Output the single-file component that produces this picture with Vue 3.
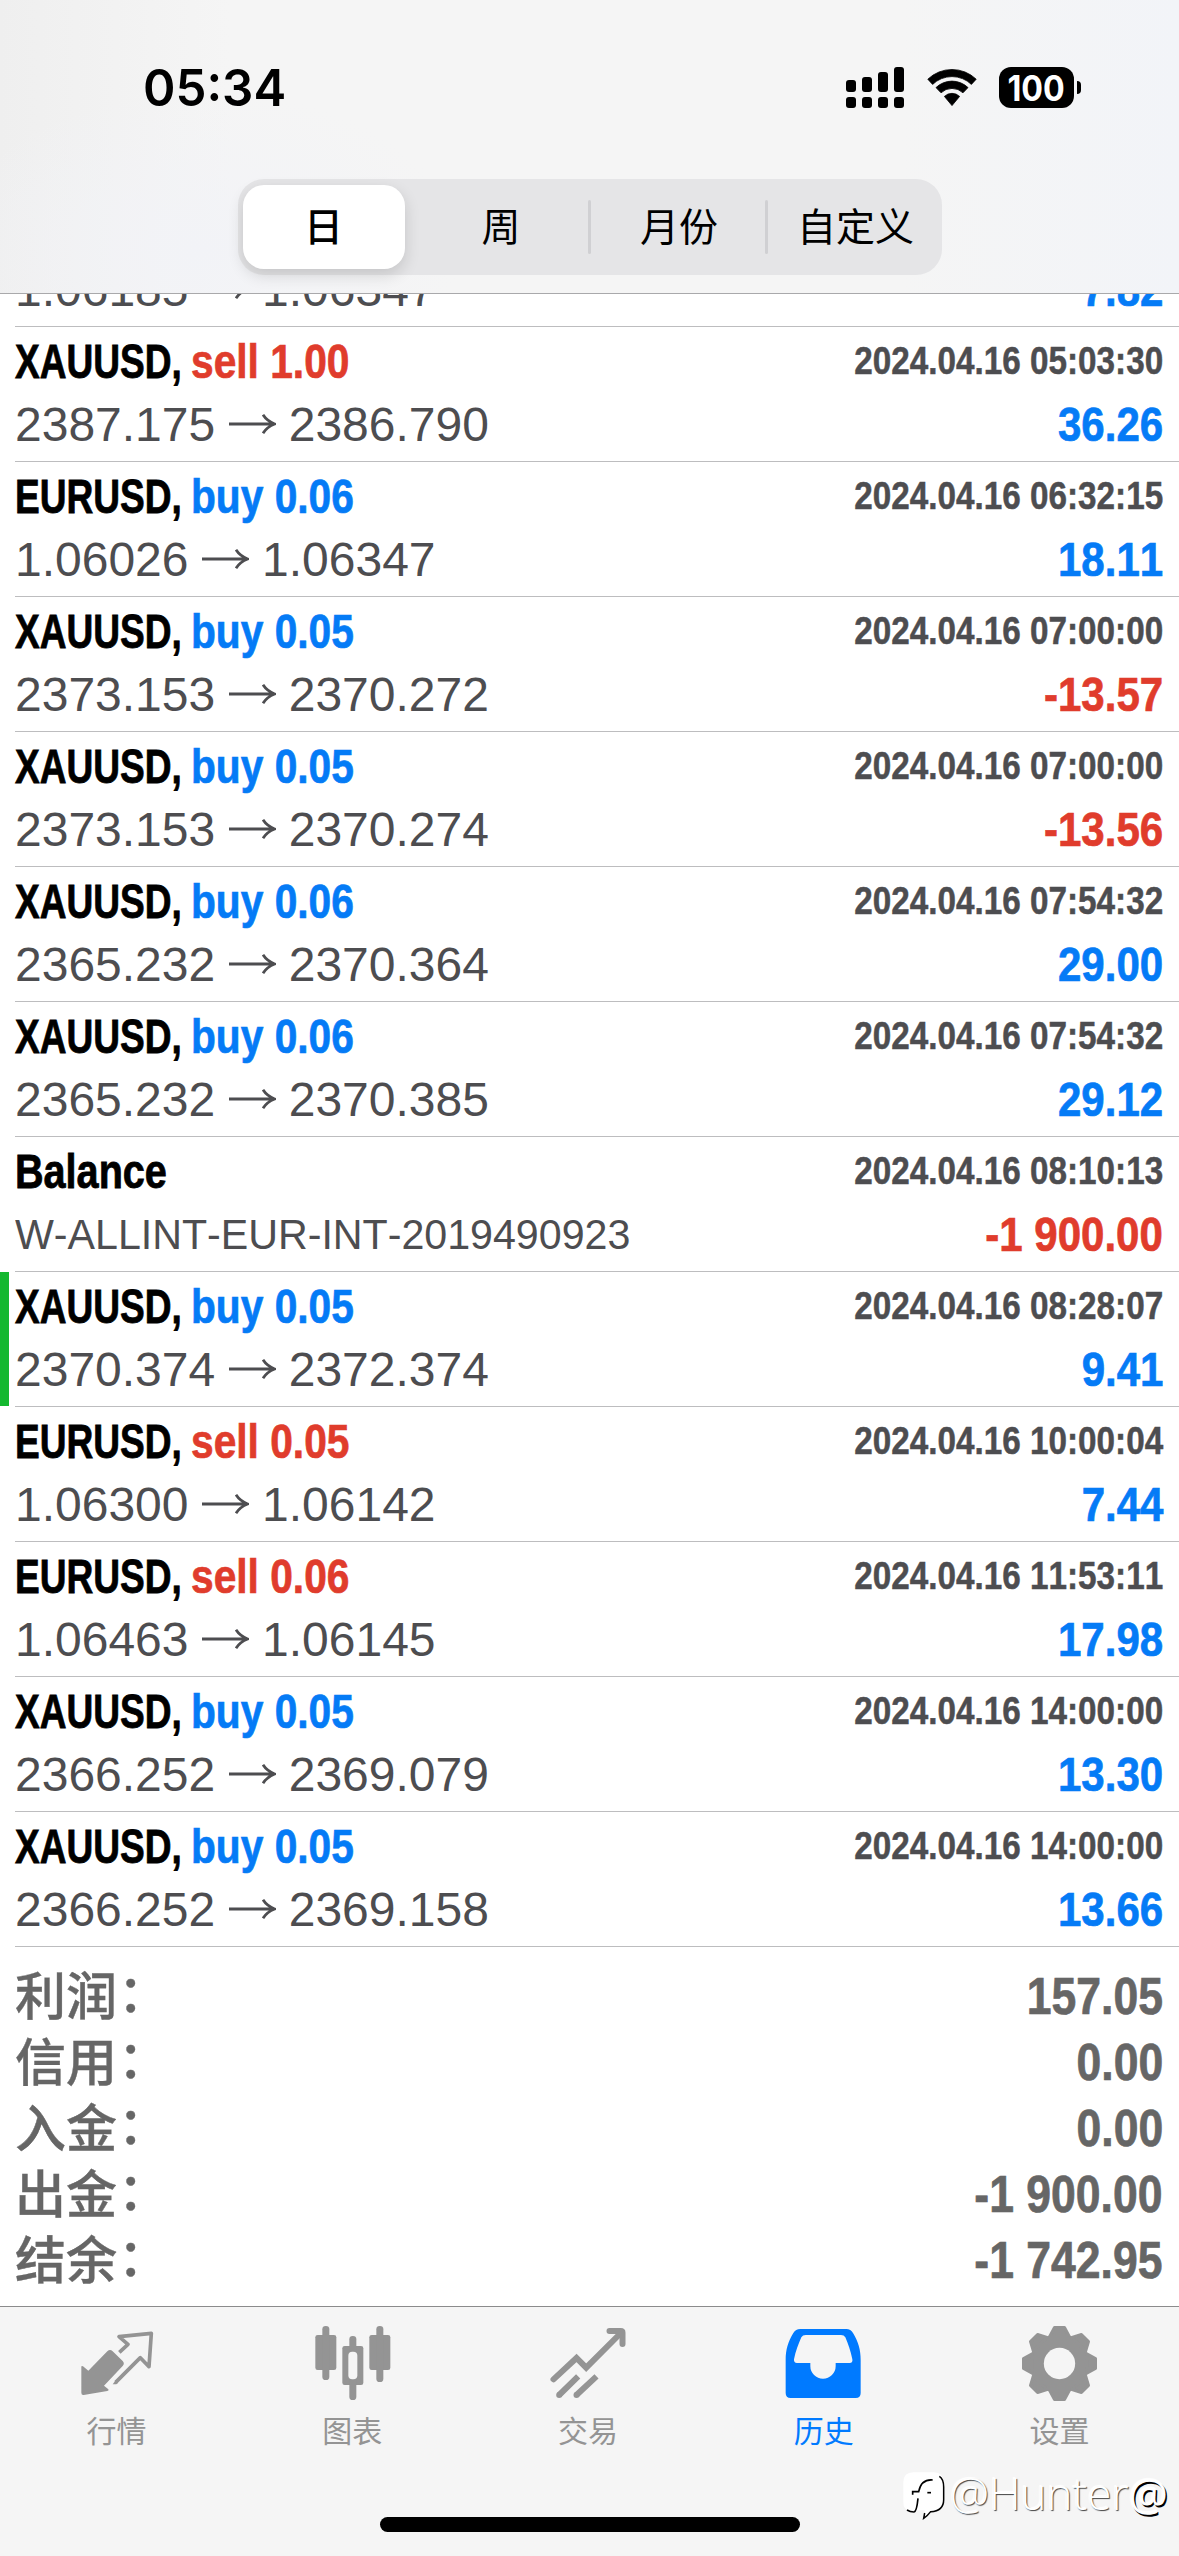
<script setup>
const trades = [
  { partial: true, open: '1.06185', close: '1.06347', profit: '7.82' },
  { symbol: 'XAUUSD', side: 'sell', volume: '1.00', open: '2387.175', close: '2386.790', time: '2024.04.16 05:03:30', profit: '36.26' },
  { symbol: 'EURUSD', side: 'buy', volume: '0.06', open: '1.06026', close: '1.06347', time: '2024.04.16 06:32:15', profit: '18.11' },
  { symbol: 'XAUUSD', side: 'buy', volume: '0.05', open: '2373.153', close: '2370.272', time: '2024.04.16 07:00:00', profit: '-13.57' },
  { symbol: 'XAUUSD', side: 'buy', volume: '0.05', open: '2373.153', close: '2370.274', time: '2024.04.16 07:00:00', profit: '-13.56' },
  { symbol: 'XAUUSD', side: 'buy', volume: '0.06', open: '2365.232', close: '2370.364', time: '2024.04.16 07:54:32', profit: '29.00' },
  { symbol: 'XAUUSD', side: 'buy', volume: '0.06', open: '2365.232', close: '2370.385', time: '2024.04.16 07:54:32', profit: '29.12' },
  { comment: 'W-ALLINT-EUR-INT-2019490923', time: '2024.04.16 08:10:13', profit: '-1 900.00' },
  { symbol: 'XAUUSD', side: 'buy', volume: '0.05', open: '2370.374', close: '2372.374', time: '2024.04.16 08:28:07', profit: '9.41', marked: true },
  { symbol: 'EURUSD', side: 'sell', volume: '0.05', open: '1.06300', close: '1.06142', time: '2024.04.16 10:00:04', profit: '7.44' },
  { symbol: 'EURUSD', side: 'sell', volume: '0.06', open: '1.06463', close: '1.06145', time: '2024.04.16 11:53:11', profit: '17.98' },
  { symbol: 'XAUUSD', side: 'buy', volume: '0.05', open: '2366.252', close: '2369.079', time: '2024.04.16 14:00:00', profit: '13.30' },
  { symbol: 'XAUUSD', side: 'buy', volume: '0.05', open: '2366.252', close: '2369.158', time: '2024.04.16 14:00:00', profit: '13.66' },
]

const totals = [
  { label: '利润', value: '157.05' },
  { label: '信用', value: '0.00' },
  { label: '入金', value: '0.00' },
  { label: '出金', value: '-1 900.00' },
  { label: '结余', value: '-1 742.95' },
]

const teeth = [0, 45, 90, 135, 180, 225, 270, 315]
</script>

<template>
  <div class="screen">
    <header class="nav">
      <div class="status">
        <div class="clock"><span>05:34</span></div>
        <div class="indicators">
          <svg class="signal" width="58" height="41" viewBox="0 0 58 41">
            <rect x="0" y="13" width="10" height="12" rx="3" />
            <rect x="16" y="10" width="10" height="15" rx="3" />
            <rect x="32" y="5" width="10" height="20" rx="3" />
            <rect x="48" y="0" width="10" height="25" rx="3" />
            <rect v-for="x in [0, 16, 32, 48]" :key="x" :x="x" y="30" width="10" height="11" rx="3" />
          </svg>
          <svg class="wifi" width="50" height="37" viewBox="0 0 50 37">
            <path d="M0.8 10.2 A35 35 0 0 1 49.2 10.2 L44.4 15.4 A28 28 0 0 0 5.6 15.4 Z" stroke="#000" stroke-width="0.8" stroke-linejoin="round" />
            <path d="M9 18.6 A23 23 0 0 1 41 18.6 L36 23.8 A16 16 0 0 0 14 23.8 Z" stroke="#000" stroke-width="0.8" stroke-linejoin="round" />
            <path d="M17.4 27.4 A11 11 0 0 1 32.6 27.4 L25 36.6 Z" stroke="#000" stroke-width="0.8" stroke-linejoin="round" />
          </svg>
          <div class="battery"><div class="cell"><span>100</span></div><i class="nub"></i></div>
        </div>
      </div>
      <div class="segments">
        <div class="segment selected">日</div>
        <div class="segment week">周</div>
        <i class="divider"></i>
        <div class="segment month">月份</div>
        <i class="divider"></i>
        <div class="segment custom">自定义</div>
      </div>
    </header>

    <main class="history">
      <ul class="trades">
        <li v-for="(t, i) in trades" :key="i" class="trade" :class="{ marked: t.marked, partial: t.partial }">
          <div class="cells">
            <div v-if="!t.partial" class="line first">
              <div v-if="t.symbol" class="title">
                <span class="symbol">{{ t.symbol }},</span>
                <span class="side" :class="t.side">{{ t.side }} {{ t.volume }}</span>
              </div>
              <div v-else class="title">
                <span class="symbol balance">Balance</span>
              </div>
              <span class="time">{{ t.time }}</span>
            </div>
            <div class="line second">
              <span v-if="t.comment" class="comment">{{ t.comment }}</span>
              <div v-else class="prices">
                <span>{{ t.open }}</span>
                <svg class="arrow" width="47" height="20" viewBox="0 0 47 20">
                  <path d="M0 10 H45 M34 0.8 Q38 7 45.6 10 Q38 13 34 19.2" fill="none" stroke="#4d4d50" stroke-width="2.8" />
                </svg>
                <span>{{ t.close }}</span>
              </div>
              <span class="profit" :class="{ loss: t.profit[0] === '-' }">{{ t.profit }}</span>
            </div>
          </div>
        </li>
      </ul>
      <dl class="totals">
        <div v-for="s in totals" :key="s.label" class="total">
          <dt>{{ s.label }}<span class="colon">：</span></dt>
          <dd>{{ s.value }}</dd>
        </div>
      </dl>
    </main>

    <footer class="tabbar">
      <nav class="tabs">
        <div class="tab">
          <svg class="icon" viewBox="240 96 228 240">
            <path d="M244 231 Q244 226 249 229 L265 242 L322 184 Q330 176 338 184 L368 213 Q375 220 368 228 L312 287 L325 298 Q328 302 322 303 L251 315 Q244 316 244 308 Z" />
            <path d="M358 187 L384 163 L357 140 L454 130 L447 230 L421 203 L347 277" fill="none" stroke="#949494" stroke-width="11" stroke-linejoin="round" />
            <path d="M338 283 L347 271 L354 278 L349 283 Z" />
          </svg>
          <span>行情</span>
        </div>
        <div class="tab">
          <svg class="icon" viewBox="947 96 228 240">
            <rect x="945" y="135" width="63" height="105" rx="7" />
            <rect x="966" y="108" width="21" height="162" rx="10" />
            <rect x="1107" y="135" width="63" height="105" rx="7" />
            <rect x="1128" y="108" width="21" height="168" rx="10" />
            <rect x="1026" y="168" width="63" height="117" rx="7" />
            <rect x="1047" y="138" width="21" height="192" rx="10" />
            <rect x="1044" y="185" width="27" height="83" rx="12" fill="#f5f5f5" />
          </svg>
          <span>图表</span>
        </div>
        <div class="tab">
          <svg class="icon" viewBox="394.5 96 228 240">
            <g fill="none" stroke="#949494" stroke-width="18" stroke-linecap="round" stroke-linejoin="miter">
              <path d="M402 268 L471 204 L500 233 L604 129" />
              <path d="M570 123 H604 Q609 123 609 128 V162" stroke-linejoin="round" />
            </g>
            <g fill="none" stroke="#949494" stroke-width="18">
              <path d="M419 315 L476 259 M471 315 L531 259" />
            </g>
            <circle cx="419" cy="315" r="9" />
            <circle cx="471" cy="315" r="9" />
          </svg>
          <span>交易</span>
        </div>
        <div class="tab active">
          <svg class="icon" viewBox="22 96 228 240">
            <path fill-rule="evenodd" d="M62 117 H200 Q213 117 220 129 C236 155 243 180 243 210 V309 Q243 324 228 324 H33 Q18 324 18 309 V210 C18 180 25 155 41 129 Q48 117 62 117 Z M78 135 Q69 135 65 142 C56 163 48 183 43 208 Q42 219 52 219 H92 V228 A38 38 0 0 0 168 228 V219 H210 Q220 219 218 208 C213 183 206 163 197 142 Q193 135 184 135 Z" />
          </svg>
          <span>历史</span>
        </div>
        <div class="tab">
          <svg class="icon" viewBox="729 96 228 240">
            <g transform="translate(838.5 220.5)">
              <circle r="89" />
              <path v-for="a in teeth" :key="a" :transform="`rotate(${a})`" d="M-29 -82 L-15 -108 H15 L29 -82 Z" stroke="#949494" stroke-width="9" stroke-linejoin="round" />
              <circle r="47" fill="#f5f5f5" />
            </g>
          </svg>
          <span>设置</span>
        </div>
      </nav>
      <div class="home"></div>
      <div class="watermark">
        <svg width="44" height="50" viewBox="366 542 132 150">
          <path d="M400 546 H462 Q490 546 490 576 V636 Q490 664 452 664 L431 684 L434 660 H400 Q370 666 370 636 V576 Q370 546 400 546 Z" fill="#fff" />
          <g fill="none" stroke="#000">
            <path d="M478 558 Q491 566 491 590 V628 Q491 662 452 664 Q444 675 431 684 L434 668" stroke-width="4.5" />
            <path d="M458 569 Q424 566 416 604 H398 V613" stroke-width="5" />
            <path d="M414 624 Q410 664 402 665 Q390 665 381 659" stroke-width="5" />
            <path d="M442 607 H453" stroke-width="5" />
          </g>
        </svg>
        <span class="handle">@Hunter<b>@</b></span>
      </div>
    </footer>
  </div>
</template>

<style>
body {
  margin: 0;
  background: #fff;
}
</style>

<style scoped>
.screen {
  width: 1179px;
  height: 2556px;
  display: flex;
  flex-direction: column;
  overflow: hidden;
  background: #fff;
  font-family: "Liberation Sans", "Noto Sans CJK SC", sans-serif;
  font-kerning: none;
}
.nav {
  box-sizing: border-box;
  height: 294px;
  flex: none;
  display: flex;
  flex-direction: column;
  align-items: center;
  border-bottom: 1px solid #a9a9ab;
  background:
    radial-gradient(ellipse 260px 160px at 200px 250px, #f2f3f7 0%, transparent 100%),
    linear-gradient(90deg, #efefef 0, #f5f5f5 230px, #f5f5f5 900px, #f2f4f8 1179px);
}
.status {
  box-sizing: border-box;
  width: 100%;
  height: 179px;
  padding: 67px 98px 0 143px;
  display: flex;
  justify-content: space-between;
  align-items: flex-start;
}
.clock {
  font: 600 51px/42px Inter, sans-serif;
}
.clock span {
  display: inline-block;
  transform: scaleX(0.965);
  transform-origin: left;
}
.indicators {
  display: flex;
  height: 41px;
}
.wifi {
  margin: 2px 22px 0 23px;
}
.battery {
  display: flex;
  align-items: center;
  gap: 3px;
}
.cell {
  width: 75px;
  height: 41px;
  border-radius: 12px;
  background: #000;
  color: #fff;
  text-align: center;
  font: 700 35px/42px Inter, sans-serif;
}
.cell span {
  display: inline-block;
  transform: scaleX(0.92);
}
.nub {
  width: 4px;
  height: 13px;
  border-radius: 0 5px 5px 0;
  background: #000;
}
.segments {
  box-sizing: border-box;
  width: 704px;
  height: 96px;
  padding: 6px 0 6px 5px;
  display: flex;
  align-items: center;
  border-radius: 26px;
  background: #e5e5e7;
}
.segment {
  flex: none;
  box-sizing: border-box;
  height: 84px;
  border-radius: 21px;
  text-align: center;
  font: 400 39px/78px "Noto Sans CJK SC", sans-serif;
  color: #000;
}
.selected {
  width: 162px;
  font-weight: 500;
  background: #fff;
  box-shadow: 0 6px 16px rgba(0, 0, 0, 0.14);
}
.week {
  width: 173px;
  margin-left: 10px;
}
.month {
  width: 174px;
  padding-left: 3px;
}
.custom {
  width: 174px;
  padding-left: 2px;
}
.divider {
  width: 3px;
  height: 54px;
  border-radius: 2px;
  background: #d0d0d3;
}
.history {
  height: 2012px;
  flex: none;
  overflow: hidden;
}
.trades {
  list-style: none;
  margin: -32px 0 0;
  padding: 0;
}
.trade {
  box-sizing: border-box;
  height: 135px;
  padding-left: 15px;
}
.trade.partial {
  height: 65px;
}
.trade.marked {
  background: linear-gradient(#14b82f, #14b82f) 0 0 / 9px 134px no-repeat;
}
.cells {
  box-sizing: border-box;
  height: 100%;
  padding-right: 16px;
  border-bottom: 1px solid #bdbdbf;
}
.line {
  display: flex;
  justify-content: space-between;
  white-space: pre;
}
.first {
  height: 70px;
}
.second {
  height: 55px;
}
.title {
  display: flex;
  font-size: 48px;
  line-height: 70px;
  font-weight: 700;
}
.symbol {
  width: 176px;
  transform: scaleX(0.772);
  transform-origin: left;
  -webkit-text-stroke: 0.8px #000;
}
.symbol.balance {
  transform: scaleX(0.825);
}
.side {
  transform: scaleX(0.848);
  transform-origin: left;
  -webkit-text-stroke: 0.7px currentColor;
}
.buy {
  color: #057bf6;
}
.sell {
  color: #e03c2c;
}
.time {
  font-size: 39px;
  line-height: 68px;
  font-weight: 700;
  color: #4d4d50;
  transform: scaleX(0.853);
  transform-origin: right;
  -webkit-text-stroke: 0.5px currentColor;
}
.prices {
  display: flex;
  font-size: 48px;
  line-height: 55px;
  color: #4d4d50;
}
.arrow {
  margin: 17px 13px 0 13.5px;
}
.comment {
  font-size: 42px;
  line-height: 55px;
  color: #4d4d50;
  transform: scaleX(0.98);
  transform-origin: left;
}
.profit {
  font-size: 48px;
  line-height: 55px;
  font-weight: 700;
  color: #057bf6;
  transform: scaleX(0.875);
  transform-origin: right;
  -webkit-text-stroke: 0.7px currentColor;
}
.profit.loss {
  color: #e03c2c;
}
.totals {
  margin: 0;
  padding: 16px 16px 0 15px;
}
.total {
  height: 66px;
  display: flex;
  justify-content: space-between;
  color: #666;
}
.total dt {
  font: 500 51px/60px "Noto Sans CJK SC", sans-serif;
  -webkit-text-stroke: 0.4px currentColor;
}
.colon {
  position: relative;
  left: 1px;
  top: -3px;
}
.total dd {
  margin: 0;
  font-size: 51px;
  font-weight: 700;
  line-height: 68px;
  transform: scaleX(0.873);
  transform-origin: right;
  -webkit-text-stroke: 0.7px currentColor;
}
.tabbar {
  position: relative;
  box-sizing: border-box;
  height: 250px;
  flex: none;
  border-top: 1px solid #8b8b8c;
  background: #f5f5f5;
}
.tabs {
  display: flex;
  padding-top: 15px;
}
.tab {
  flex: 1;
  display: flex;
  flex-direction: column;
  align-items: center;
  color: #949494;
  fill: #949494;
  font: 400 30px/44px "Noto Sans CJK SC", sans-serif;
}
.tab span {
  margin-right: 3px;
}
.tab.active {
  color: #007aff;
  fill: #007aff;
}
.icon {
  width: 76px;
  height: 80px;
  overflow: visible;
  margin-bottom: 5px;
}
.home {
  width: 420px;
  height: 15px;
  margin: 66px auto 0;
  border-radius: 8px;
  background: #000;
}
.watermark {
  position: absolute;
  left: 902px;
  top: 164px;
  display: flex;
  align-items: flex-start;
}
.handle {
  margin-left: 4px;
  font: 300 44px/44px "Open Sans", "Noto Sans", sans-serif;
  color: #fff;
  text-shadow: 1px 1px 1px #444, -1px -1px 1px #fff;
  white-space: nowrap;
}
.handle b {
  font-weight: 400;
  text-shadow: 1.5px 1.5px 0 #000, -1px -1px 1px #fff;
}
</style>
